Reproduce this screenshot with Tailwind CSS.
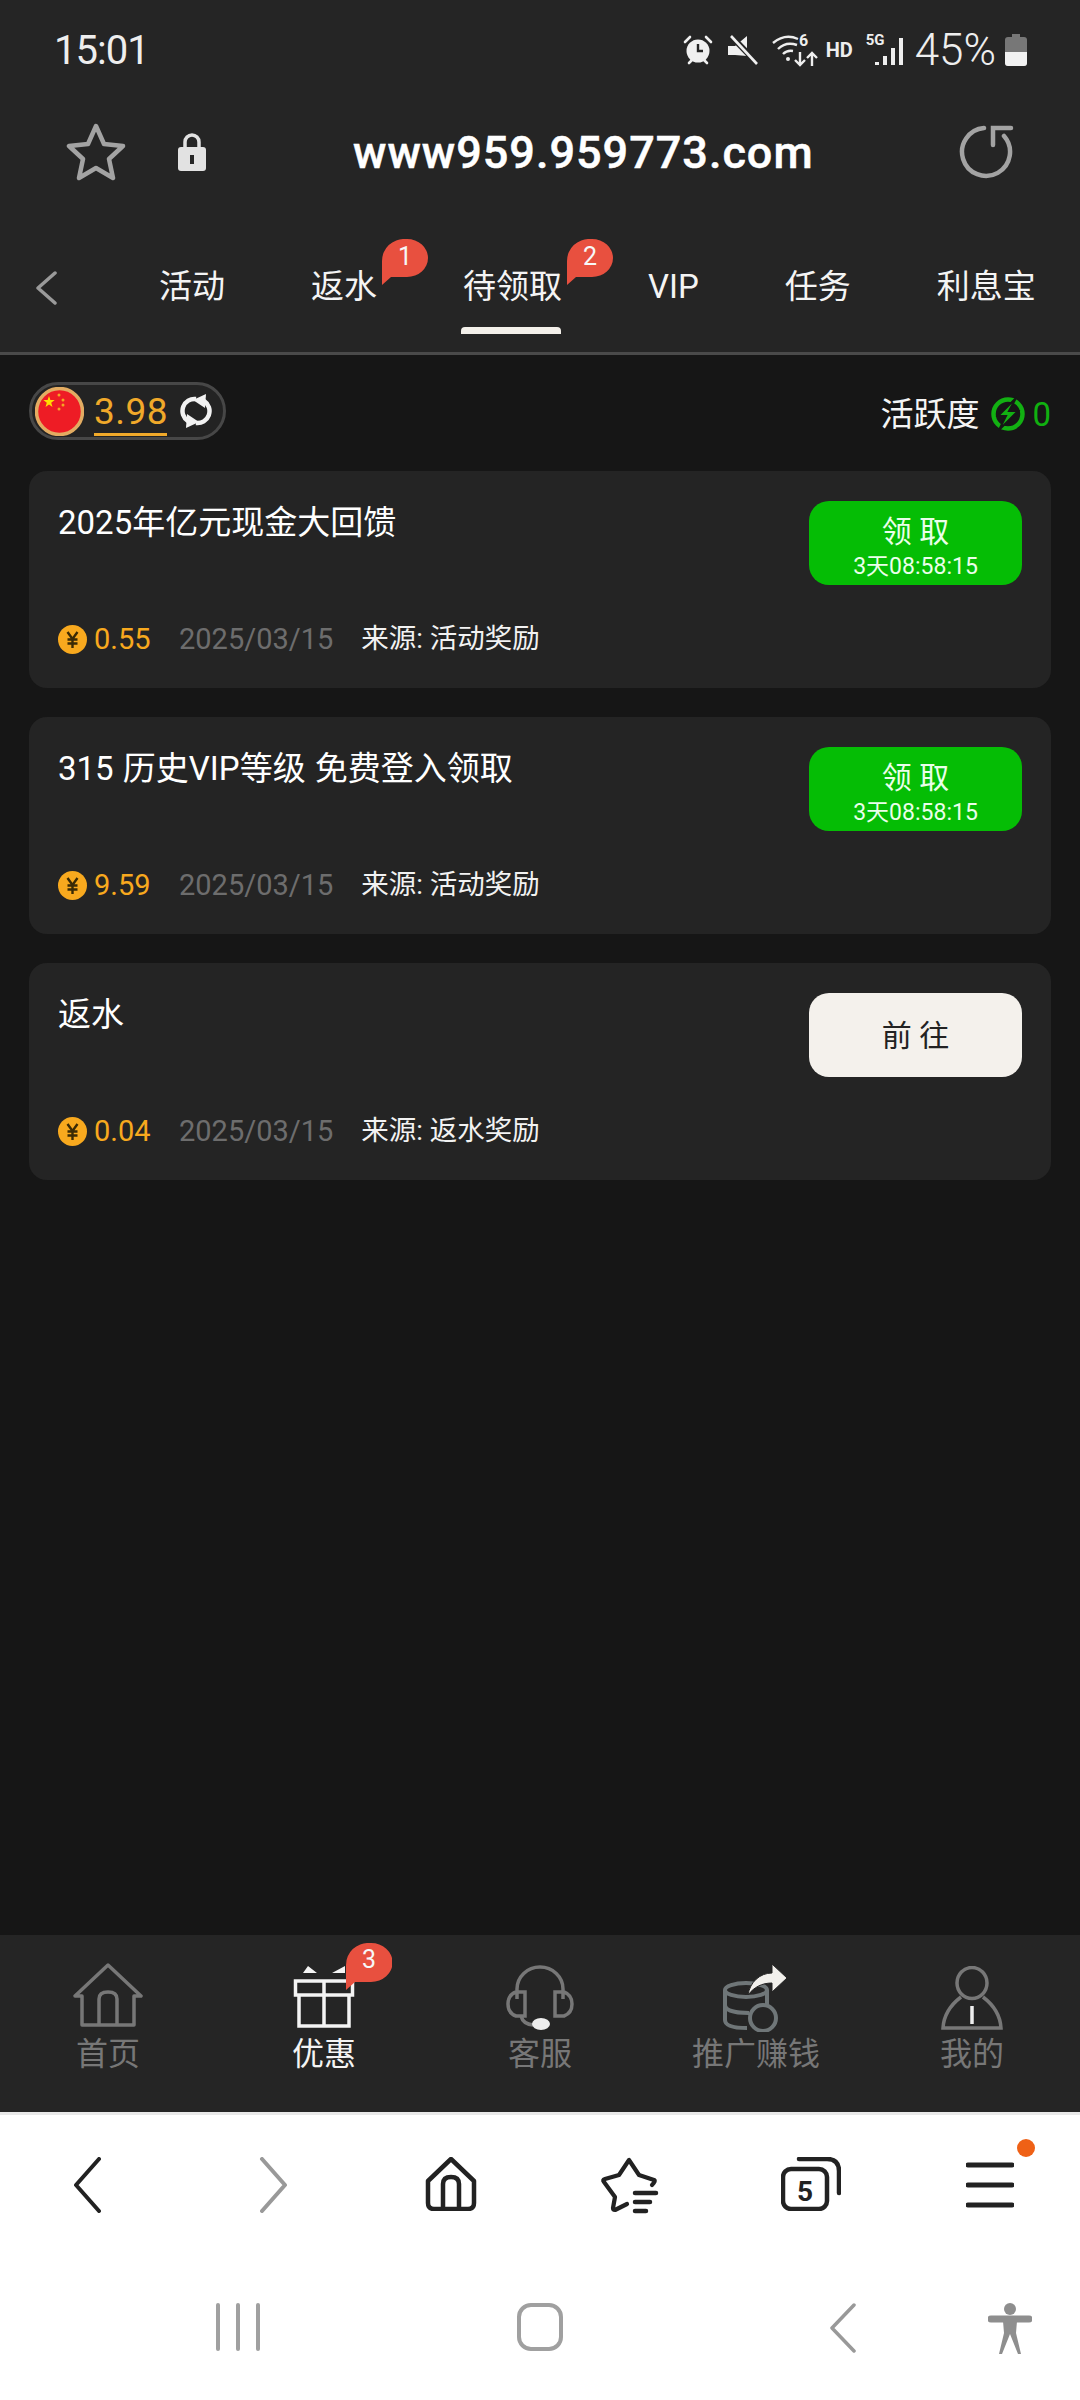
<!DOCTYPE html>
<html lang="zh-CN">
<head>
  <meta charset="UTF-8" />
  <meta name="viewport" content="width=device-width, initial-scale=1.0" />
  <title>待领取</title>
  <script src="https://cdn.jsdelivr.net/npm/@tailwindcss/browser@4"></script>
</head>
<body class="bg-[#161616]">
  <div class="w-[1080px] h-[2400px] flex flex-col overflow-hidden font-['Roboto','Noto_Sans_CJK_SC',sans-serif] text-white">

    <!-- top chrome -->
    <header class="bg-[#252525] h-[352px] shrink-0">
      <div class="h-[100px] flex items-center pl-[54px] pr-[53px] text-[#eeeeee]">
        <span class="text-[40px] tracking-[-1px] leading-none pt-[2px]">15:01</span>
        <div class="ml-auto flex items-center">
          <svg class="w-[30px] h-[30px]" viewBox="0 0 30 30"><circle cx="15" cy="16" r="11.5" fill="#f0f0f0"/><path d="M15 9v7h5" fill="none" stroke="#252525" stroke-width="2.4"/><path d="M2 7l5-5M28 7l-5-5M6 28l3-3M24 28l-3-3" stroke="#f0f0f0" stroke-width="2.6" stroke-linecap="round"/></svg>
          <svg class="w-[32px] h-[30px] ml-[14px]" viewBox="0 0 32 30"><path d="M1 11h7l12-10v20L8 20H1z" fill="#f0f0f0"/><path d="M4 1l27 28" stroke="#252525" stroke-width="6"/><path d="M4 1l26 28" stroke="#f0f0f0" stroke-width="2.6"/></svg>
          <svg class="w-[46px] h-[36px] ml-[13px]" viewBox="0 0 46 36"><path d="M1 11Q13 1 26 7M6 17Q14 9 25 13M11 22Q15 18 21 19" fill="none" stroke="#eeeeee" stroke-width="2.4"/><circle cx="16" cy="27" r="2" fill="#eeeeee"/><path d="M28 20v13M23 28l5 5 5-5M40 34V21M35 26l5-5 5 5" fill="none" stroke="#eeeeee" stroke-width="2.4"/><text x="27" y="14" font-size="16" font-weight="700" fill="#eeeeee">6</text></svg>
          <span class="text-[20px] font-bold leading-none ml-[8px] w-[30px]">HD</span>
          <div class="relative w-[38px] h-[34px] ml-[10px]">
            <span class="absolute left-0 top-0 text-[15px] font-bold leading-none">5G</span>
            <svg class="absolute left-[8px] top-[3px] w-[30px] h-[30px]" viewBox="0 0 30 30"><path d="M3 26v3M11 20v9M19 12v17M27 2v27" stroke="#eeeeee" stroke-width="4"/></svg>
          </div>
          <span class="text-[44px] leading-none ml-[11px] font-light">45%</span>
          <svg class="w-[22px] h-[32px] ml-[9px]" viewBox="0 0 22 32"><path d="M7 0h8v3H7z" fill="#777"/><rect y="3" width="22" height="29" rx="3" fill="#777"/><path d="M0 18h22v11a3 3 0 0 1-3 3H3a3 3 0 0 1-3-3z" fill="#f2f2f2"/></svg>
        </div>
      </div>
      <div class="h-[100px] mt-[2px] flex items-center">
        <svg class="w-[60px] h-[58px] ml-[66px]" viewBox="0 0 60 58"><path d="M30 3l8 18 19 2-14 13 4 19-17-10-17 10 4-19L3 23l19-2z" fill="none" stroke="#a3a3a3" stroke-width="4.5" stroke-linejoin="round"/></svg>
        <svg class="w-[28px] h-[38px] ml-[52px]" viewBox="0 0 28 38"><path d="M7 17V9a7 7 0 0 1 14 0v8" fill="none" stroke="#e2e2e2" stroke-width="3.5"/><rect y="14" width="28" height="24" rx="3" fill="#e2e2e2"/><rect x="12" y="22" width="4" height="9" fill="#252525"/></svg>
        <span class="ml-[147px] text-[45px] tracking-[1px] font-medium leading-none [-webkit-text-stroke:0.5px_white]">www959.959773.com</span>
        <svg class="w-[56px] h-[56px] ml-[144px]" viewBox="0 0 56 56"><path d="M26 4A24 24 0 1 0 46 12" fill="none" stroke="#a3a3a3" stroke-width="4.5" stroke-linecap="round"/><path d="M35 21V4H53" fill="none" stroke="#a3a3a3" stroke-width="4.5" stroke-linecap="round"/></svg>
      </div>
      <nav class="h-[150px] relative flex items-start pl-[159px] pt-[61px] gap-[86px] text-[33px] leading-[48px] text-[#f4f4f4]">
        <svg class="absolute left-[34px] top-[69px] w-[24px] h-[34px]" viewBox="0 0 24 34"><path d="M21 2L4 17l17 15" fill="none" stroke="#9a9a9a" stroke-width="3.5" stroke-linecap="round" stroke-linejoin="round"/></svg>
        <span>活动</span>
        <span class="relative">返水
          <span class="absolute left-[71px] top-[-24px] w-[46px] h-[46px]">
            <svg class="absolute inset-0 w-[46px] h-[46px]" viewBox="0 0 46 46"><path d="M23 0h2a21 19 0 0 1 0 38H9L0 46V22A22 22 0 0 1 23 0z" fill="#e8503f"/></svg>
            <span class="absolute inset-x-0 top-[-2px] text-center text-[25px] leading-[40px] text-[#f7f7f7]">1</span>
          </span>
        </span>
        <span class="relative">待领取
          <span class="absolute left-[104px] top-[-24px] w-[46px] h-[46px]">
            <svg class="absolute inset-0 w-[46px] h-[46px]" viewBox="0 0 46 46"><path d="M23 0h2a21 19 0 0 1 0 38H9L0 46V22A22 22 0 0 1 23 0z" fill="#e8503f"/></svg>
            <span class="absolute inset-x-0 top-[-2px] text-center text-[25px] leading-[40px] text-[#f7f7f7]">2</span>
          </span>
          <span class="absolute left-[-2px] right-[1px] top-[64px] h-[7px] rounded-t-[4px] bg-[#f3f0ea]"></span>
        </span>
        <span>VIP</span>
        <span>任务</span>
        <span>利息宝</span>
      </nav>
    </header>
    <div class="h-[3px] bg-[#4a4a4a] shrink-0"></div>

    <!-- content -->
    <main class="flex-1 px-[29px] bg-[#161616]">
      <div class="flex items-center justify-between h-[116px] pb-[4px]">
        <div class="w-[197px] h-[58px] rounded-full border-[3px] border-[#474747] bg-[#232323] flex items-center pl-[3px]">
          <svg class="w-[49px] h-[49px] shrink-0" viewBox="0 0 49 49"><circle cx="24.5" cy="24.5" r="23" fill="#ee1c25" stroke="#e3ac62" stroke-width="3.5"/><path d="M14 9l1.4 4.100h4.300l-3.500 2.700 1.300 4.100-3.500-2.500-3.500 2.500 1.300-4.100-3.500-2.700h4.300z" fill="#ffde00"/><circle cx="24" cy="8" r="1.500" fill="#f5a623"/><circle cx="28" cy="13" r="1.500" fill="#f5a623"/><circle cx="28" cy="18" r="1.500" fill="#f5a623"/><circle cx="24" cy="22" r="1.500" fill="#f5a623"/></svg>
          <span class="ml-[10px] w-[73px] text-center text-[37px] tracking-[0.5px] leading-[43px] text-[#f0a92a] border-b-[3px] border-[#f0a92a] mt-[3px]">3.98</span>
          <svg class="w-[32px] h-[34px] ml-[13px]" viewBox="0 0 32 34"><path d="M8 27A12 12 0 0 1 16 5" fill="none" stroke="#f2f2f2" stroke-width="4.500"/><path d="M13 6L26 0l-1 14z" fill="#f2f2f2"/><path d="M24 7A12 12 0 0 1 16 29" fill="none" stroke="#f2f2f2" stroke-width="4.500"/><path d="M19 28L6 34l1-14z" fill="#f2f2f2"/></svg>
        </div>
        <div class="flex items-center text-[33px] leading-none mt-[6px]">
          <span class="text-[#f4f4f4]">活跃度</span>
          <svg class="w-[34px] h-[34px] ml-[12px]" viewBox="0 0 34 34"><circle cx="17" cy="17" r="14.500" fill="none" stroke="#12b012" stroke-width="4.500"/><path d="M25 1L7 19h8L8 33l19-19h-9z" fill="#12b012" stroke="#161616" stroke-width="2"/></svg>
          <span class="ml-[7px] text-[#10b010]">0</span>
        </div>
      </div>

      <div class="flex flex-col gap-[29px]">
        <section class="h-[217px] rounded-[18px] bg-[#242424] px-[29px] pt-[30px] relative">
          <div class="flex justify-between">
            <h2 class="text-[33px] leading-[44px] font-normal">2025年亿元现金大回馈</h2>
            <button class="w-[213px] h-[84px] rounded-[20px] bg-[#05bd05] text-center text-[#eaffea] pt-[6px]">
              <div class="text-[30px] leading-[42px]">领 取</div>
              <div class="text-[23px] leading-[28px]">3天08:58:15</div>
            </button>
          </div>
          <div class="absolute left-[29px] top-[153px] flex items-center h-[30px] text-[29px] leading-none">
            <svg class="w-[29px] h-[29px]" viewBox="0 0 29 29"><circle cx="14.500" cy="14.500" r="14.500" fill="#f8a91e"/><path d="M9.500 7l5 7 5-7M14.500 14v9M9.500 14.500h10M9.500 18.500h10" fill="none" stroke="#3a2a05" stroke-width="2.400"/></svg>
            <span class="ml-[7px] w-[85px] text-[#f8a91e]">0.55</span>
            <span class="text-[#6d6d6d]">2025/03/15</span>
            <span class="ml-[28px] text-[27.500px] text-[#f2f2f2]">来源: 活动奖励</span>
          </div>
        </section>

        <section class="h-[217px] rounded-[18px] bg-[#242424] px-[29px] pt-[30px] relative">
          <div class="flex justify-between">
            <h2 class="text-[33px] leading-[44px] font-normal [word-spacing:1px]">315 历史VIP等级 免费登入领取</h2>
            <button class="w-[213px] h-[84px] rounded-[20px] bg-[#05bd05] text-center text-[#eaffea] pt-[6px]">
              <div class="text-[30px] leading-[42px]">领 取</div>
              <div class="text-[23px] leading-[28px]">3天08:58:15</div>
            </button>
          </div>
          <div class="absolute left-[29px] top-[153px] flex items-center h-[30px] text-[29px] leading-none">
            <svg class="w-[29px] h-[29px]" viewBox="0 0 29 29"><circle cx="14.500" cy="14.500" r="14.500" fill="#f8a91e"/><path d="M9.500 7l5 7 5-7M14.500 14v9M9.500 14.500h10M9.500 18.500h10" fill="none" stroke="#3a2a05" stroke-width="2.400"/></svg>
            <span class="ml-[7px] w-[85px] text-[#f8a91e]">9.59</span>
            <span class="text-[#6d6d6d]">2025/03/15</span>
            <span class="ml-[28px] text-[27.500px] text-[#f2f2f2]">来源: 活动奖励</span>
          </div>
        </section>

        <section class="h-[217px] rounded-[18px] bg-[#242424] px-[29px] pt-[30px] relative">
          <div class="flex justify-between">
            <h2 class="text-[33px] leading-[44px] font-normal">返水</h2>
            <button class="w-[213px] h-[84px] rounded-[20px] bg-[#f4f1ec] text-center text-[#222222] text-[30px]">前 往</button>
          </div>
          <div class="absolute left-[29px] top-[153px] flex items-center h-[30px] text-[29px] leading-none">
            <svg class="w-[29px] h-[29px]" viewBox="0 0 29 29"><circle cx="14.500" cy="14.500" r="14.500" fill="#f8a91e"/><path d="M9.500 7l5 7 5-7M14.500 14v9M9.500 14.500h10M9.500 18.500h10" fill="none" stroke="#3a2a05" stroke-width="2.400"/></svg>
            <span class="ml-[7px] w-[85px] text-[#f8a91e]">0.04</span>
            <span class="text-[#6d6d6d]">2025/03/15</span>
            <span class="ml-[28px] text-[27.500px] text-[#f2f2f2]">来源: 返水奖励</span>
          </div>
        </section>
      </div>
    </main>

    <!-- site tab bar -->
    <footer class="h-[177px] shrink-0 bg-[#252525] grid grid-cols-5 pt-[27px] text-[32px] leading-[40px] text-[#777777]">
      <div class="flex flex-col items-center">
        <div class="h-[72px]"><svg class="w-[70px] h-[64px] mt-[1px]" viewBox="0 0 70 64"><path d="M9 33H2L35 2l33 31h-7v29H9zM26 62V36q0-7 9-7t9 7v26" fill="none" stroke="#777" stroke-width="3.500" stroke-linejoin="round"/></svg></div>
        <span>首页</span>
      </div>
      <div class="flex flex-col items-center text-[#f4f4f4] relative">
        <div class="h-[72px]"><svg class="w-[62px] h-[64px] mt-[2px]" viewBox="0 0 62 64"><path d="M10 9l5-7 9 7zM39 9l13-7v7z" fill="#f4f4f4"/><path d="M2.500 17h57v14h-57zM6 31h50v31H6zM31 17v45" fill="none" stroke="#f4f4f4" stroke-width="3.500"/></svg></div>
        <span>优惠</span>
        <span class="absolute left-[130px] top-[-19px] w-[46px] h-[47px]">
          <svg class="absolute inset-0 w-[46px] h-[47px]" viewBox="0 0 46 47"><path d="M23 0h2a21 19 0 0 1 0 39H9L0 47V22A22 22 0 0 1 23 0z" fill="#e8503f"/></svg>
          <span class="absolute inset-x-0 top-[-3px] text-center text-[25px] leading-[40px] text-[#f7f7f7]">3</span>
        </span>
      </div>
      <div class="flex flex-col items-center">
        <div class="h-[72px]"><svg class="w-[70px] h-[66px] mt-[3px]" viewBox="0 0 70 66"><path d="M12 34V24a23 22 0 0 1 46 0v10M20 27H11q-8 3-8 12t8 12h9zM50 27h9q8 3 8 12t-8 12h-9zM16 51q2 8 12 9" fill="none" stroke="#777" stroke-width="3.500"/><ellipse cx="36" cy="59" rx="9" ry="6" fill="#eeeeee"/></svg></div>
        <span>客服</span>
      </div>
      <div class="flex flex-col items-center">
        <div class="h-[72px]"><svg class="w-[68px] h-[70px]" viewBox="0 0 68 70"><ellipse cx="24" cy="28" rx="21" ry="7" fill="none" stroke="#6f7678" stroke-width="4"/><path d="M3 28v30c0 6 10 8 22 8M3 43c0 6 12 8 24 8M45 28v14" fill="none" stroke="#6f7678" stroke-width="4"/><circle cx="41" cy="56" r="13" fill="#252525" stroke="#6f7678" stroke-width="4"/><path d="M26 33C28 20 38 11 50 11V2L65 16 50 30V21C40 21 32 25 26 33z" fill="#f2f0ec" stroke="#252525" stroke-width="1"/></svg></div>
        <span>推广赚钱</span>
      </div>
      <div class="flex flex-col items-center">
        <div class="h-[72px]"><svg class="w-[64px] h-[64px] mt-[4px]" viewBox="0 0 64 64"><ellipse cx="32" cy="17" rx="15" ry="15.500" fill="none" stroke="#777" stroke-width="3.500"/><path d="M21 31Q4 44 3 62h58Q60 44 43 31" fill="none" stroke="#777" stroke-width="3.500"/><path d="M32 40v18" stroke="#eeeeee" stroke-width="3.500"/></svg></div>
        <span>我的</span>
      </div>
    </footer>
    <div class="h-[3px] bg-[#e8e8e8] shrink-0"></div>

    <!-- browser toolbar + system nav -->
    <div class="bg-white h-[285px] shrink-0 relative">
      <div class="h-[150px] grid grid-cols-6 items-start pt-[42px]">
        <svg class="w-[32px] h-[56px] ml-[72px]" viewBox="0 0 32 56"><path d="M27 2L4 28l23 26" fill="none" stroke="#222" stroke-width="4" stroke-linecap="round" stroke-linejoin="round"/></svg>
        <svg class="w-[32px] h-[56px] ml-[77px]" viewBox="0 0 32 56"><path d="M5 2l23 26L5 54" fill="none" stroke="#999" stroke-width="4" stroke-linecap="round" stroke-linejoin="round"/></svg>
        <svg class="w-[54px] h-[54px] ml-[64px]" viewBox="0 0 54 54"><path d="M27 2L4 24v22q0 6 6 6h34q6 0 6-6V24zM19 52V27q0-7 8-7t8 7v25" fill="none" stroke="#222" stroke-width="4.500" stroke-linejoin="round"/></svg>
        <svg class="w-[60px] h-[58px] ml-[60px]" viewBox="20 15 60 58"><path d="M72 43q4-4 2-5L59 33 49 18 39 33 25 37q-3 1-1 3l11 15-2 11q0 2 2 2l12-6" fill="none" stroke="#222" stroke-width="4.200" stroke-linecap="round" stroke-linejoin="round"/><path d="M55 51h21M55 60h15M55 69h11" stroke="#222" stroke-width="4.500" stroke-linecap="round"/></svg>
        <svg class="w-[60px] h-[54px] ml-[61px]" viewBox="0 0 60 54"><rect x="2" y="12" width="44" height="40" rx="8" fill="none" stroke="#222" stroke-width="4.500"/><path d="M18 2h28q12 0 12 12v22" fill="none" stroke="#222" stroke-width="4.500" stroke-linecap="round"/><text x="24" y="44" font-size="28" font-weight="700" text-anchor="middle" fill="#222">5</text></svg>
        <svg class="w-[48px] h-[46px] ml-[66px] mt-[5px]" viewBox="0 0 48 46"><path d="M2 3h44M2 23h44M2 43h44" stroke="#222" stroke-width="5" stroke-linecap="round"/></svg>
      </div>
      <span class="absolute left-[1017px] top-[24px] w-[18px] h-[18px] rounded-full bg-[#ef6116]"></span>
      <div class="flex items-start pt-[38px] h-[135px]">
        <div class="ml-[216px] flex gap-[16px] h-[48px]">
          <span class="w-[4px] bg-[#a0a0a0] rounded-full"></span>
          <span class="w-[4px] bg-[#a0a0a0] rounded-full"></span>
          <span class="w-[4px] bg-[#a0a0a0] rounded-full"></span>
        </div>
        <span class="ml-[257px] w-[46px] h-[48px] rounded-[14px] border-[4px] border-[#a0a0a0]"></span>
        <svg class="w-[28px] h-[50px] ml-[266px]" viewBox="0 0 28 50"><path d="M25 2L3 25l22 23" fill="none" stroke="#999" stroke-width="3.500" stroke-linecap="round" stroke-linejoin="round"/></svg>
        <svg class="w-[44px] h-[52px] ml-[131px]" viewBox="0 0 44 52"><circle cx="22" cy="6" r="6" fill="#8e8e8e"/><path d="M3 16h38" stroke="#8e8e8e" stroke-width="7" stroke-linecap="round"/><path d="M15 18h14l-1 12 5 21h-3l-8-20-8 20h-3l5-21z" fill="#8e8e8e"/></svg>
      </div>
    </div>
  </div>
</body>
</html>
